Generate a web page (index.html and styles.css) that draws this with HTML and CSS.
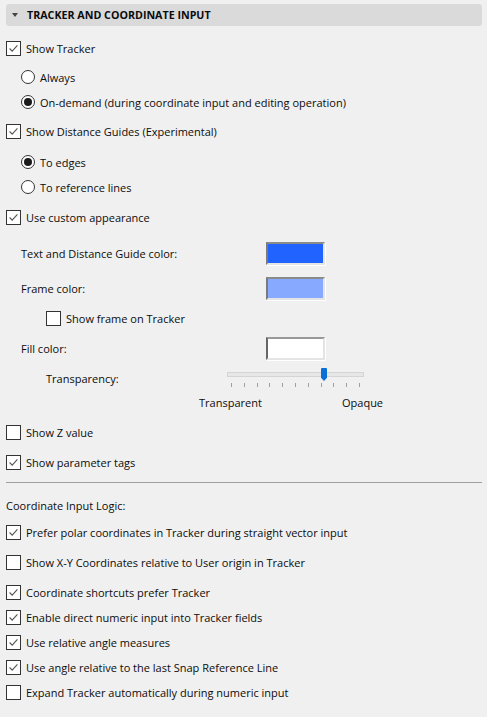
FILE: index.html
```html
<!DOCTYPE html>
<html>
<head>
<meta charset="utf-8">
<link rel="stylesheet" href="styles.css">
</head>
<body>
<div class="panel">
  <div class="header"><span class="tri"></span><span class="htext">TRACKER AND COORDINATE INPUT</span></div>

  <div class="row m10"><span class="cb on"><svg viewBox="0 0 15 15"><path d="M3 7.5 L6 10.5 L12 4"/></svg></span>Show Tracker</div>
  <div class="row ind1 m5"><span class="rb"></span>Always</div>
  <div class="row ind1 m1"><span class="rb sel"></span>On-demand (during coordinate input and editing operation)</div>

  <div class="row m5"><span class="cb on"><svg viewBox="0 0 15 15"><path d="M3 7.5 L6 10.5 L12 4"/></svg></span>Show Distance Guides (Experimental)</div>
  <div class="row ind1 m7"><span class="rb sel"></span>To edges</div>
  <div class="row ind1 m1"><span class="rb"></span>To reference lines</div>

  <div class="row m6"><span class="cb on"><svg viewBox="0 0 15 15"><path d="M3 7.5 L6 10.5 L12 4"/></svg></span>Use custom appearance</div>

  <div class="row crow ind1 m12"><span>Text and Distance Guide color:</span><span class="swatch blue"></span></div>
  <div class="row crow ind1 m11"><span>Frame color:</span><span class="swatch lblue"></span></div>
  <div class="row ind2 m6"><span class="cb"></span>Show frame on Tracker</div>
  <div class="row crow ind1 m6"><span>Fill color:</span><span class="swatch white"></span></div>

  <div class="row trow ind2 m6"><span>Transparency:</span>
    <div class="slider">
      <div class="track"></div>
      <div class="ticks"><i></i><i></i><i></i><i></i><i></i><i></i><i></i><i></i><i></i><i></i><i></i></div>
      <div class="thumb"></div>
    </div>
  </div>
  <div class="row lrow"><span>Transparent</span><span>Opaque</span></div>

  <div class="row m6"><span class="cb"></span>Show Z value</div>
  <div class="row m6"><span class="cb on"><svg viewBox="0 0 15 15"><path d="M3 7.5 L6 10.5 L12 4"/></svg></span>Show parameter tags</div>

  <div class="divider"></div>

  <div class="row m10">Coordinate Input Logic:</div>
  <div class="row m3"><span class="cb on"><svg viewBox="0 0 15 15"><path d="M3 7.5 L6 10.5 L12 4"/></svg></span>Prefer polar coordinates in Tracker during straight vector input</div>
  <div class="row m6"><span class="cb"></span>Show X-Y Coordinates relative to User origin in Tracker</div>
  <div class="row m6"><span class="cb on"><svg viewBox="0 0 15 15"><path d="M3 7.5 L6 10.5 L12 4"/></svg></span>Coordinate shortcuts prefer Tracker</div>
  <div class="row m1"><span class="cb on"><svg viewBox="0 0 15 15"><path d="M3 7.5 L6 10.5 L12 4"/></svg></span>Enable direct numeric input into Tracker fields</div>
  <div class="row m1"><span class="cb on"><svg viewBox="0 0 15 15"><path d="M3 7.5 L6 10.5 L12 4"/></svg></span>Use relative angle measures</div>
  <div class="row m1"><span class="cb on"><svg viewBox="0 0 15 15"><path d="M3 7.5 L6 10.5 L12 4"/></svg></span>Use angle relative to the last Snap Reference Line</div>
  <div class="row m1"><span class="cb"></span>Expand Tracker automatically during numeric input</div>
</div>
</body>
</html>
```

FILE: styles.css
```css
html, body {
  margin: 0;
  padding: 0;
  background: #f0f0f0;
}
body {
  font-family: "Open Sans", "Noto Sans", sans-serif;
  font-size: 11px;
  color: #0c0c0c;
  width: 487px;
  height: 717px;
  overflow: hidden;
}
.panel {
  padding: 4px 5px 0 6px;
}
.header {
  height: 22px;
  background: #dadada;
  border-radius: 3px;
  display: flex;
  align-items: center;
  padding-left: 6px;
}
.tri {
  width: 0;
  height: 0;
  border-left: 3px solid transparent;
  border-right: 3px solid transparent;
  border-top: 4px solid #444;
  margin-right: 9px;
}
.htext {
  font-weight: 700;
  font-size: 10.7px;
  color: #0c0c0c;
}
.row {
  height: 24px;
  display: flex;
  align-items: center;
  white-space: nowrap;
}
.m1 { margin-top: 1px; }
.m3 { margin-top: 3px; }
.m5 { margin-top: 5px; }
.m6 { margin-top: 6px; }
.m7 { margin-top: 7px; }
.m10 { margin-top: 10px; }
.m11 { margin-top: 11px; }
.m12 { margin-top: 12px; }
.ind1 { padding-left: 15px; }
.ind2 { padding-left: 40px; }
.cb {
  width: 13px;
  height: 13px;
  border: 1px solid #333;
  background: #fff;
  margin-right: 5px;
  flex: none;
  display: block;
}
.cb svg {
  display: block;
  width: 13px;
  height: 13px;
}
.cb path {
  fill: none;
  stroke: #555;
  stroke-width: 1.3;
}
.rb {
  width: 12px;
  height: 12px;
  border: 1px solid #333;
  border-radius: 50%;
  background: #fff;
  margin-right: 5px;
  flex: none;
  display: flex;
  align-items: center;
  justify-content: center;
}
.rb.sel::after {
  content: "";
  width: 8px;
  height: 8px;
  border-radius: 50%;
  background: #1a1a1a;
}
.crow {
  display: grid;
  grid-template-columns: 245px auto;
  align-items: center;
}
.swatch {
  display: block;
  width: 55px;
  height: 19px;
  border-top: 2px solid #8a8a8a;
  border-left: 2px solid #7a7a7a;
  border-bottom: 2px solid #e4e4e4;
  border-right: 2px solid #e4e4e4;
  box-shadow: 1px 1px 0 #fff;
}
.swatch.blue { background: #2063ff; }
.swatch.lblue { background: #87a9ff; }
.swatch.white { background: #fff; border-top-color: #999; border-left-color: #666; }
.trow {
  display: grid;
  grid-template-columns: 181px 137px;
  align-items: center;
}
.slider {
  position: relative;
  height: 24px;
}
.track {
  margin-top: 6px;
  height: 3px;
  background: #e6e6e6;
  border: 1px solid #d4d4d4;
}
.ticks {
  margin-top: 6px;
  padding: 0 4px;
  display: flex;
  justify-content: space-between;
}
.ticks i {
  display: block;
  width: 1px;
  height: 4px;
  background: #a0a0a0;
}
.thumb {
  position: absolute;
  left: 94px;
  top: 2px;
  width: 6px;
  height: 13px;
  background: #0a6fd6;
  border-radius: 1px 1px 0 0;
  clip-path: polygon(0 0, 100% 0, 100% 75%, 50% 100%, 0 75%);
}
.lrow {
  display: grid;
  grid-template-columns: 143px auto;
  padding-left: 193px;
}
.divider {
  margin-top: 8px;
  height: 1px;
  background: #a0a0a0;
}
```
